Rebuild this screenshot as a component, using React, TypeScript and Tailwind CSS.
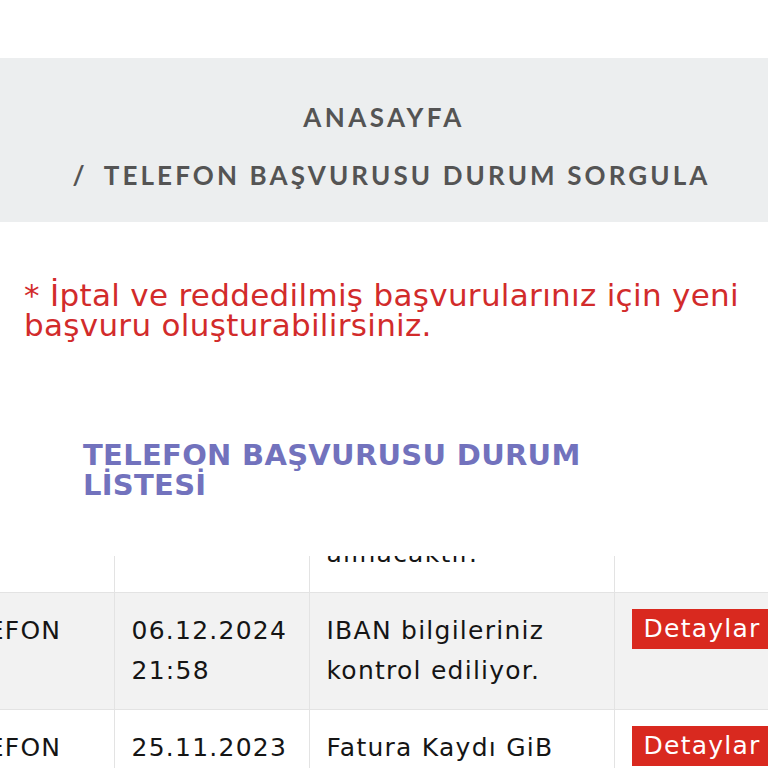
import React from "react";

const rows = [
  {
    type: "TELEFON",
    date: ["04.01.2025", "10:12"],
    status: "Başvurunuz değerlendirmeye alınacaktır.",
    bg: "bg-white",
  },
  {
    type: "TELEFON",
    date: ["06.12.2024", "21:58"],
    status: "IBAN bilgileriniz kontrol ediliyor.",
    bg: "bg-[#f2f2f2]",
  },
  {
    type: "TELEFON",
    date: ["25.11.2023", "14:05"],
    status: "Fatura Kaydı GiB üzerinden sorgulanıyor.",
    bg: "bg-white",
  },
];

export default function App() {
  return (
    <main className="min-h-screen bg-white font-['DejaVu_Sans',sans-serif]">
      <div className="h-[58px]" />
      <section className="bg-[#eceeef] h-[164px] pt-[12px] flex flex-col items-center justify-center gap-[26px] text-[#545454] font-['Lato',sans-serif]">
        <a className="text-[26px] font-bold tracking-[0.13em] leading-[32px]">ANASAYFA</a>
        <div className="pl-[15px] text-[26px] font-bold tracking-[0.12em] leading-[32px]">
          <span className="mr-4">/</span>TELEFON BAŞVURUSU DURUM SORGULA
        </div>
      </section>

      <p className="px-6 mt-[58px] text-[31px] leading-[30px] tracking-[0.01em] text-[#d22b2b]">
        * İptal ve reddedilmiş başvurularınız için yeni başvuru oluşturabilirsiniz.
      </p>

      <h2 className="px-[83px] mt-[100px] text-[29px] leading-[30px] font-bold tracking-[0.01em] text-[#7272bd]">
        TELEFON BAŞVURUSU DURUM LİSTESİ
      </h2>

      <div className="mt-[56px] h-[212px] overflow-hidden">
        <table className="table-fixed w-[912px] -ml-[78px] -mt-[120px] border-collapse text-[25px] leading-[40px] text-[#151515] tracking-[0.05em]">
          <colgroup>
            <col className="w-[192px]" />
            <col className="w-[195px]" />
            <col className="w-[305px]" />
            <col className="w-[220px]" />
          </colgroup>
          <tbody>
            {rows.map((r, i) => (
              <tr key={i} className={`${r.bg} border-b border-[#e3e3e3]`}>
                <td className="align-top px-[17px] py-[18px] border-r border-[#e3e3e3]">
                  {r.type}
                </td>
                <td className="align-top px-[17px] py-[18px] border-r border-[#e3e3e3]">
                  {r.date[0]}
                  <br />
                  {r.date[1]}
                </td>
                <td className="align-top px-[17px] py-[18px] border-r border-[#e3e3e3]">
                  {r.status}
                </td>
                <td className="align-top px-[17px] pt-[16px]">
                  <span className="inline-block bg-[#d9291f] text-white px-3 leading-[40px] whitespace-nowrap">
                    Detaylar
                  </span>
                </td>
              </tr>
            ))}
          </tbody>
        </table>
      </div>
    </main>
  );
}
